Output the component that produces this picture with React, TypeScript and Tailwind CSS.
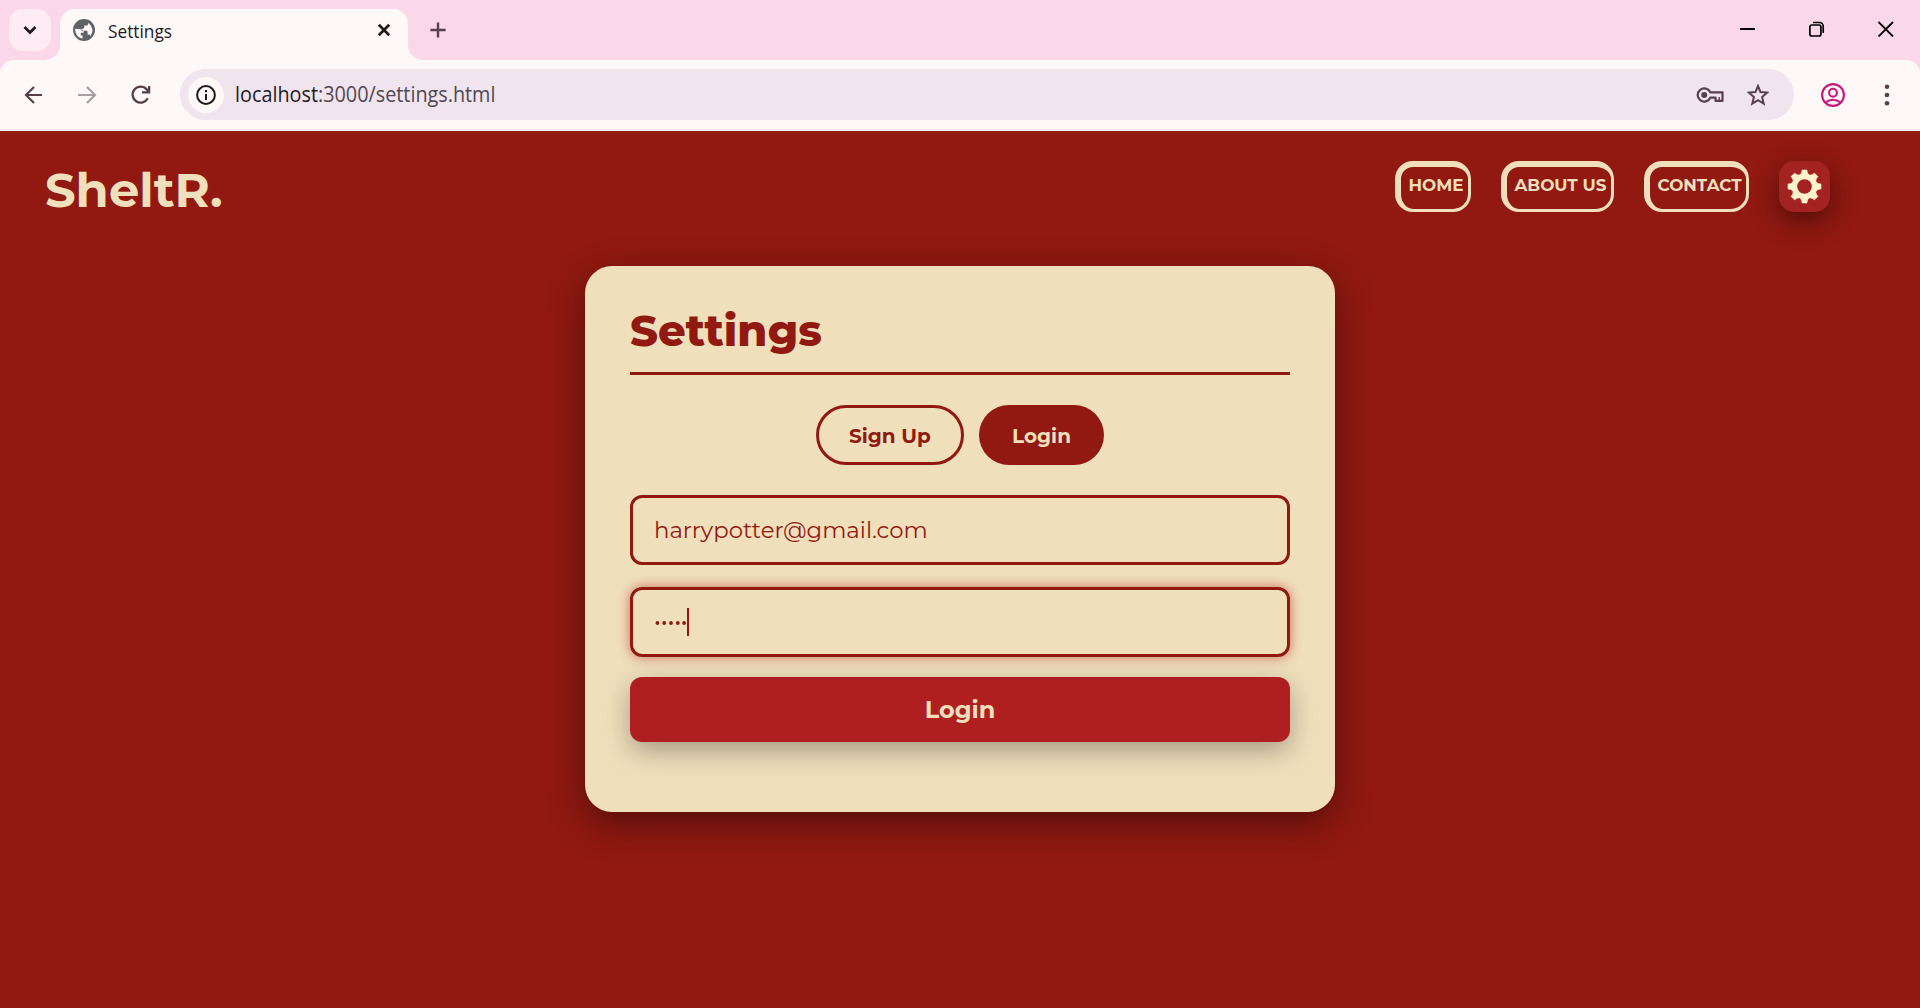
import React from "react";

const brand = "font-['Montserrat','Inter',sans-serif]";
const chrome = "font-['Segoe_UI','Open_Sans',sans-serif]";

function Globe() {
  return (
    <svg width="22" height="22" viewBox="0 0 24 24" fill="#5f6368">
      <path d="M12 0a12 12 0 1 0 0 24 12 12 0 0 0 0-24Zm-1.6 21.4A9.6 9.6 0 0 1 2.4 12c0-.5 0-1 .1-1.4L8.400 11.200c2.400.3 3.200 1.300 3.200 3v.9h-1.900c-1 0-1.400.5-1.400 1.400 0 1 .6 1.500 1.500 1.500h.6v3.400Zm8.600-2.900c-.3-1-1.100-1.500-2.100-1.500h-1v-2.900c0-.8-.5-1.400-1.300-1.400H9.300v-2.200h1.600c.8 0 1.400-.5 1.400-1.400V7.200h2.200c1.200 0 2-.9 2-2.100v-.9a9.600 9.600 0 0 1 2.500 14.300Z" />
    </svg>
  );
}

function Gear() {
  const teeth = [0, 45, 90, 135, 180, 225, 270, 315];
  return (
    <svg width="35" height="35" viewBox="-17.500 -17.500 35 35">
      <circle r="10.100" fill="none" stroke="#fff2cc" strokeWidth="5.600" />
      {teeth.map((a) => (
        <path key={a} d="M-4.100-11.800Q-2.700-13.200-2.400-16.500H2.400Q2.700-13.200 4.100-11.800Z" transform={`rotate(${a})`} fill="#fff2cc" stroke="#fff2cc" strokeWidth=".6" strokeLinejoin="round" />
      ))}
    </svg>
  );
}

function NavButton({ label, box }: { label: string; box: string }) {
  return (
    <button className={`${box} h-[51px] rounded-[18px] border-t-[6px] border-l-[6px] border-r-[3px] border-b-[3px] border-[#efdfbb] flex items-start justify-start pl-[7.5px] pt-[8px] text-[16.8px] leading-[20px] font-bold whitespace-nowrap`}>
      {label}
    </button>
  );
}

function TabStrip() {
  return (
    <div className="h-[60px] bg-[#fad8e9] flex items-start relative">
      <button className="ml-[9px] mt-[9px] w-[42px] h-[42px] rounded-[14px] bg-[#ffebf4] flex items-center justify-center">
        <svg width="14" height="10" viewBox="0 0 14 10" fill="none" stroke="#1f1a1d" strokeWidth="2.700"><path d="M1.500 2 7 7.500 12.500 2" /></svg>
      </button>
      <div className="relative ml-[9px] mt-[9px] w-[348px] h-[51px] rounded-t-[15px] bg-[#fff8f8] flex items-center pl-[13px] pr-[17px] pb-[9px]">
        <Globe />
        <span className="ml-[13px] mt-[1px] text-[18px] leading-[24px] text-[#1f1a1d] inline-block origin-left scale-x-[0.96]">Settings</span>
        <svg className="ml-auto" width="14" height="14" viewBox="0 0 14 14" fill="none" stroke="#1f1a1d" strokeWidth="2.700"><path d="M1.800 1.800l10.400 10.400M12.200 1.800 1.800 12.200" /></svg>
        <svg className="absolute -left-[15px] bottom-0" width="15" height="15" viewBox="0 0 15 15"><path d="M15 0V15H0A15 15 0 0 0 15 0Z" fill="#fff8f8" /></svg>
        <svg className="absolute -right-[15px] bottom-0" width="15" height="15" viewBox="0 0 15 15"><path d="M0 0V15H15A15 15 0 0 1 0 0Z" fill="#fff8f8" /></svg>
      </div>
      <svg className="ml-[22px] mt-[22px]" width="16" height="16" viewBox="0 0 16 16" fill="none" stroke="#56404c" strokeWidth="2.400"><path d="M8 .4V15.600M.4 8H15.600" /></svg>
      <div className="ml-auto mt-[21px] mr-[26px] flex items-center gap-[53px]">
        <svg width="16" height="16" viewBox="0 0 16 16" stroke="#000" strokeWidth="2"><path d="M0 8H15" /></svg>
        <svg width="16" height="16" viewBox="0 0 16 16" fill="none" stroke="#000" strokeWidth="1.700"><rect x=".9" y="4" width="11" height="11" rx="2" /><path d="M4 1.500h6.500a3.700 3.700 0 0 1 3.700 3.700v6.800" /></svg>
        <svg width="16" height="16" viewBox="0 0 16 16" stroke="#000" strokeWidth="1.800"><path d="M.5 1 15 15.500M15 1 .5 15.500" /></svg>
      </div>
    </div>
  );
}

function Toolbar() {
  return (
    <div className="bg-[#fad8e9]">
      <div className="h-[71px] rounded-t-[14px] bg-[#fff8f8] flex items-center pb-[2px]">
        <svg className="ml-[24px]" width="19" height="18" viewBox="0 0 19 18" fill="none" stroke="#56404c" strokeWidth="2.200"><path d="M18 9H2M10 1 2 9l8 8" /></svg>
        <svg className="ml-[35px]" width="19" height="18" viewBox="0 0 19 18" fill="none" stroke="#a89fa4" strokeWidth="2.200"><path d="M0 9H17M9 1l8 8-8 8" /></svg>
        <svg className="ml-[34px]" width="20" height="20" viewBox="0 0 20 20" fill="none" stroke="#56404c" strokeWidth="2.300"><path d="M16.800 13.300A8 8 0 1 1 15.700 4.400L18 6.700M18.100 1V7.300H11" /></svg>
        <div className="ml-[29px] w-[1614px] h-[51px] rounded-full bg-[#f0e4ee] flex items-center pl-[8px] pr-[25px]">
          <div className="size-[36px] rounded-full bg-[#fff8f8] flex items-center justify-center">
            <svg width="20" height="20" viewBox="0 0 20 20" fill="none" stroke="#1f1a1d" strokeWidth="2"><circle cx="10" cy="10" r="8.900" /><path d="M10 9v6M10 5v2.200" /></svg>
          </div>
          <span className="ml-[11px] mb-[1px] text-[21px] leading-[30px] text-[#514850] inline-block origin-left scale-x-[0.943] whitespace-nowrap"><span className="text-[#1f1a1d]">localhost</span>:3000/settings.html</span>
          <svg className="ml-auto" width="28" height="18" viewBox="0 0 28 18" fill="none" stroke="#56404c" strokeWidth="2.200"><path d="M14.300 6.300H26.500V14.800H19.500V11.700H14.300A6.600 6.600 0 1 1 14.300 6.300Z" strokeLinejoin="round" /><circle cx="8.200" cy="9" r="3" fill="#56404c" stroke="none" /><path d="M23.200 11v3.500" strokeWidth="1.400" /></svg>
          <svg className="ml-[23px]" width="22" height="22" viewBox="0 0 22 22" fill="none" stroke="#56404c" strokeWidth="2"><path d="M11 2 13.500 8.100 20.200 8.600 15.100 13 16.700 19.700 11 16.200 5.300 19.700 6.900 13 1.800 8.600 8.500 8.100Z" /></svg>
        </div>
        <svg className="ml-[27px]" width="24" height="24" viewBox="0 0 24 24" fill="none" stroke="#c9177e" strokeWidth="2.100"><circle cx="12" cy="12" r="10.900" /><circle cx="12" cy="9.700" r="3.900" /><path d="M4.300 19.500Q8 16.700 12 16.700T19.700 19.500" /></svg>
        <svg className="ml-[39px]" width="6" height="22" viewBox="0 0 6 22" fill="#56404c"><circle cx="3" cy="2.700" r="2.300" /><circle cx="3" cy="11" r="2.300" /><circle cx="3" cy="19.300" r="2.300" /></svg>
      </div>
    </div>
  );
}

export default function App() {
  return (
    <div className="w-[1920px] h-[1008px] overflow-hidden flex flex-col bg-[#911911]">
      <div className={`${chrome} shrink-0 relative`}>
        <TabStrip />
        <Toolbar />
        <div className="absolute bottom-[1px] inset-x-0 h-px bg-[#ecdfee]" />
      </div>
      <main className={`${brand} grow flex flex-col text-[#efdfbb]`}>
        <header className="h-[135px] shrink-0 flex items-start justify-between pl-[45px] pr-[90px] pt-[30px]">
          <h1 className="text-[48px] leading-[58px] font-bold">SheltR.</h1>
          <nav className="flex gap-[30px]">
            <NavButton label="HOME" box="w-[76px]" />
            <NavButton label="ABOUT US" box="w-[113px]" />
            <NavButton label="CONTACT" box="w-[105px]" />
            <button className="size-[51px] rounded-[15px] bg-[#a52222] shadow-[0_9px_27px_rgba(0,0,0,0.45)] flex items-center justify-center"><Gear /></button>
          </nav>
        </header>
        <section className="self-center w-[750px] h-[546px] rounded-[27px] bg-[#efdfbb] text-[#911911] px-[45px] pt-[36px] shadow-[0_12px_36px_rgba(0,0,0,0.42)] flex flex-col">
          <div className="h-[73px] border-b-[3px] border-[#911911]">
            <h2 className="text-[43.2px] leading-[58px] font-extrabold">Settings</h2>
          </div>
          <div className="mt-[30px] flex justify-center gap-[15px] text-[20px] font-bold">
            <button className="w-[148px] h-[60px] rounded-full border-[3px] border-[#911911] pt-px">Sign Up</button>
            <button className="w-[125px] h-[60px] rounded-full bg-[#911911] text-[#efdfbb] pt-px">Login</button>
          </div>
          <div className="mt-[30px] h-[70px] shrink-0 rounded-[12px] border-[3px] border-[#911911] flex items-center pl-[21px] text-[22.8px] font-normal">
            harrypotter@gmail.com
          </div>
          <div className="mt-[22px] h-[70px] shrink-0 rounded-[12px] border-[3px] border-[#911911] shadow-[0_0_12px_rgba(176,31,31,0.6)] flex items-center pl-[22px]">
            <svg width="31" height="6" viewBox="0 0 31 6" fill="#911911" className="mt-[2px]">
              {[2.400, 9.200, 16, 22.800, 29.100].map((x) => <circle key={x} cx={x} cy="3" r="1.900" />)}
            </svg>
            <div className="ml-px w-[2px] h-[28px] bg-[#911911]" />
          </div>
          <button className="mt-[20px] h-[65px] shrink-0 rounded-[12px] bg-[#b01f1f] text-[#efdfbb] text-[24px] font-bold shadow-[0_9px_27px_rgba(0,0,0,0.3)]">Login</button>
        </section>
      </main>
    </div>
  );
}
